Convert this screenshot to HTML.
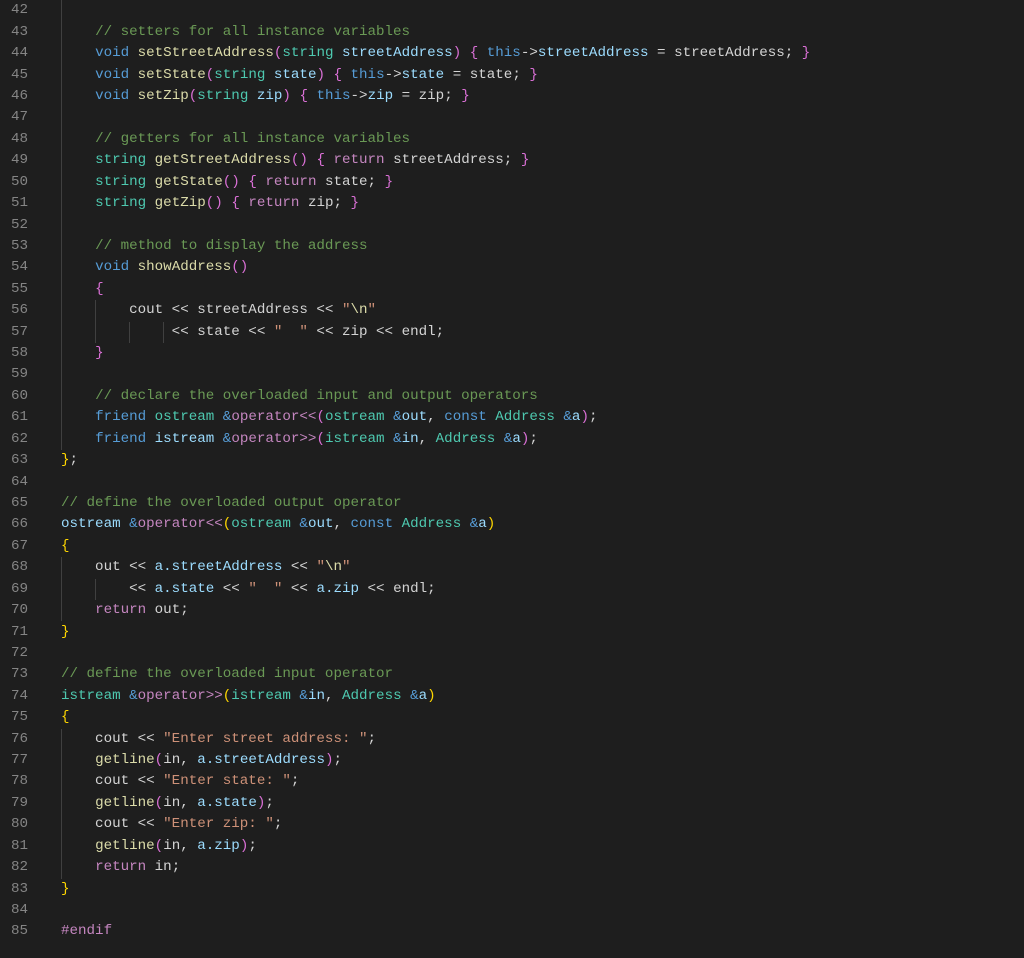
<!DOCTYPE html>
<html><head><meta charset="utf-8"><style>
html,body{margin:0;padding:0;background:#1e1e1e;width:1024px;height:958px;overflow:hidden}
.wrap{position:relative;width:1024px;height:958px}
.ln,.code{position:absolute;top:0.3px;margin:0;font-family:"Liberation Mono",monospace;font-size:14.2px;line-height:21.42px;white-space:pre}
.ln{left:0;width:28px;text-align:right;color:#858585}
.code{left:61px;color:#d4d4d4}
.gd{position:absolute;width:1px;background:#404040}
.c{color:#6a9955}.k{color:#569cd6}.f{color:#dcdcaa}.t{color:#4ec9b0}.v{color:#9cdcfe}.s{color:#ce9178}.r{color:#c586c0}.g{color:#ffd700}.p{color:#da70d6}
</style></head><body><div class="wrap">
<div class="gd" style="left:61px;top:0;height:450px"></div>
<div class="gd" style="left:95px;top:300px;height:43px"></div>
<div class="gd" style="left:129px;top:322px;height:21px"></div>
<div class="gd" style="left:163px;top:322px;height:21px"></div>
<div class="gd" style="left:61px;top:557px;height:64px"></div>
<div class="gd" style="left:95px;top:579px;height:21px"></div>
<div class="gd" style="left:61px;top:729px;height:150px"></div>
<pre class="ln">42
43
44
45
46
47
48
49
50
51
52
53
54
55
56
57
58
59
60
61
62
63
64
65
66
67
68
69
70
71
72
73
74
75
76
77
78
79
80
81
82
83
84
85</pre>
<pre class="code">

    <span class="c">// setters for all instance variables</span>
    <span class="k">void</span> <span class="f">setStreetAddress</span><span class="p">(</span><span class="t">string</span> <span class="v">streetAddress</span><span class="p">)</span> <span class="p">{</span> <span class="k">this</span>-&gt;<span class="v">streetAddress</span> = streetAddress; <span class="p">}</span>
    <span class="k">void</span> <span class="f">setState</span><span class="p">(</span><span class="t">string</span> <span class="v">state</span><span class="p">)</span> <span class="p">{</span> <span class="k">this</span>-&gt;<span class="v">state</span> = state; <span class="p">}</span>
    <span class="k">void</span> <span class="f">setZip</span><span class="p">(</span><span class="t">string</span> <span class="v">zip</span><span class="p">)</span> <span class="p">{</span> <span class="k">this</span>-&gt;<span class="v">zip</span> = zip; <span class="p">}</span>

    <span class="c">// getters for all instance variables</span>
    <span class="t">string</span> <span class="f">getStreetAddress</span><span class="p">()</span> <span class="p">{</span> <span class="r">return</span> streetAddress; <span class="p">}</span>
    <span class="t">string</span> <span class="f">getState</span><span class="p">()</span> <span class="p">{</span> <span class="r">return</span> state; <span class="p">}</span>
    <span class="t">string</span> <span class="f">getZip</span><span class="p">()</span> <span class="p">{</span> <span class="r">return</span> zip; <span class="p">}</span>

    <span class="c">// method to display the address</span>
    <span class="k">void</span> <span class="f">showAddress</span><span class="p">()</span>
    <span class="p">{</span>
        cout &lt;&lt; streetAddress &lt;&lt; <span class="s">"</span><span class="f">\n</span><span class="s">"</span>
             &lt;&lt; state &lt;&lt; <span class="s">"  "</span> &lt;&lt; zip &lt;&lt; endl;
    <span class="p">}</span>

    <span class="c">// declare the overloaded input and output operators</span>
    <span class="k">friend</span> <span class="t">ostream</span> <span class="k">&amp;</span><span class="r">operator&lt;&lt;</span><span class="p">(</span><span class="t">ostream</span> <span class="k">&amp;</span><span class="v">out</span>, <span class="k">const</span> <span class="t">Address</span> <span class="k">&amp;</span><span class="v">a</span><span class="p">)</span>;
    <span class="k">friend</span> <span class="v">istream</span> <span class="k">&amp;</span><span class="r">operator&gt;&gt;</span><span class="p">(</span><span class="t">istream</span> <span class="k">&amp;</span><span class="v">in</span>, <span class="t">Address</span> <span class="k">&amp;</span><span class="v">a</span><span class="p">)</span>;
<span class="g">}</span>;

<span class="c">// define the overloaded output operator</span>
<span class="v">ostream</span> <span class="k">&amp;</span><span class="r">operator&lt;&lt;</span><span class="g">(</span><span class="t">ostream</span> <span class="k">&amp;</span><span class="v">out</span>, <span class="k">const</span> <span class="t">Address</span> <span class="k">&amp;</span><span class="v">a</span><span class="g">)</span>
<span class="g">{</span>
    out &lt;&lt; <span class="v">a.streetAddress</span> &lt;&lt; <span class="s">"</span><span class="f">\n</span><span class="s">"</span>
        &lt;&lt; <span class="v">a.state</span> &lt;&lt; <span class="s">"  "</span> &lt;&lt; <span class="v">a.zip</span> &lt;&lt; endl;
    <span class="r">return</span> out;
<span class="g">}</span>

<span class="c">// define the overloaded input operator</span>
<span class="t">istream</span> <span class="k">&amp;</span><span class="r">operator&gt;&gt;</span><span class="g">(</span><span class="t">istream</span> <span class="k">&amp;</span><span class="v">in</span>, <span class="t">Address</span> <span class="k">&amp;</span><span class="v">a</span><span class="g">)</span>
<span class="g">{</span>
    cout &lt;&lt; <span class="s">"Enter street address: "</span>;
    <span class="f">getline</span><span class="p">(</span>in, <span class="v">a.streetAddress</span><span class="p">)</span>;
    cout &lt;&lt; <span class="s">"Enter state: "</span>;
    <span class="f">getline</span><span class="p">(</span>in, <span class="v">a.state</span><span class="p">)</span>;
    cout &lt;&lt; <span class="s">"Enter zip: "</span>;
    <span class="f">getline</span><span class="p">(</span>in, <span class="v">a.zip</span><span class="p">)</span>;
    <span class="r">return</span> in;
<span class="g">}</span>

<span class="r">#endif</span></pre>
</div></body></html>
